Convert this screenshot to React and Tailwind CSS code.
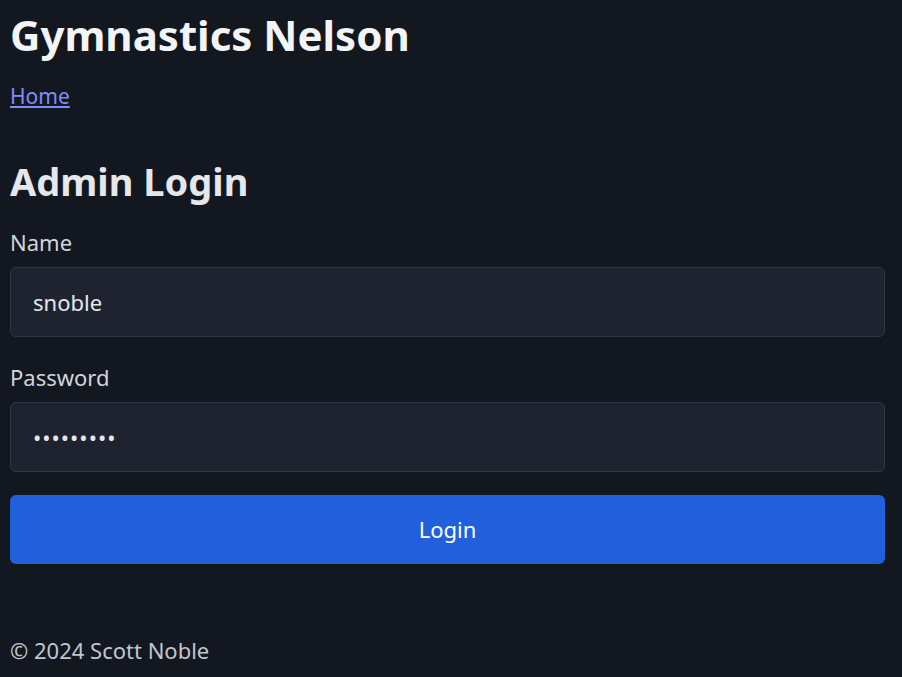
export default function App() {
  return (
    <div
      className="min-h-[677px] bg-[#13171f] pl-[10px] pr-[17px] text-[22px] text-[#d1d5db]"
      style={{ fontFamily: '"Noto Sans", "Open Sans", sans-serif' }}
    >
      <header>
        <h1 className="pt-[8px] text-[42px] leading-[54px] font-bold text-[#f3f4f6]">Gymnastics Nelson</h1>
        <nav className="mt-[21px] text-[21px] leading-[26px]">
          <a href="#" className="text-[#818cf8] underline underline-offset-2">Home</a>
        </nav>
      </header>

      <main className="mt-[46px]">
        <h2 className="text-[38px] leading-[52px] font-bold text-[#e5e7eb]">Admin Login</h2>
        <form className="mt-[20px] flex flex-col">
          <label className="leading-[30px]">Name</label>
          <input
            type="text"
            defaultValue="snoble"
            className="mt-[10px] h-[70px] w-full rounded-md border border-[#313645] bg-[#1f2330] px-[22px] text-[#e5e7eb] outline-none"
          />
          <label className="mt-[25px] leading-[30px]">Password</label>
          <input
            type="password"
            defaultValue="snoblepwd"
            className="mt-[10px] h-[70px] w-full rounded-md border border-[#313645] bg-[#1f2330] px-[22px] tracking-[1px] text-[#e5e7eb] outline-none"
          />
          <button
            type="button"
            className="mt-[23px] h-[69px] w-full rounded-md bg-[#2060dd] text-white"
          >
            Login
          </button>
        </form>
      </main>

      <footer className="mt-[71px] pb-[12px] leading-[30px] text-[#c0c6d0]">© 2024 Scott Noble</footer>
    </div>
  );
}
